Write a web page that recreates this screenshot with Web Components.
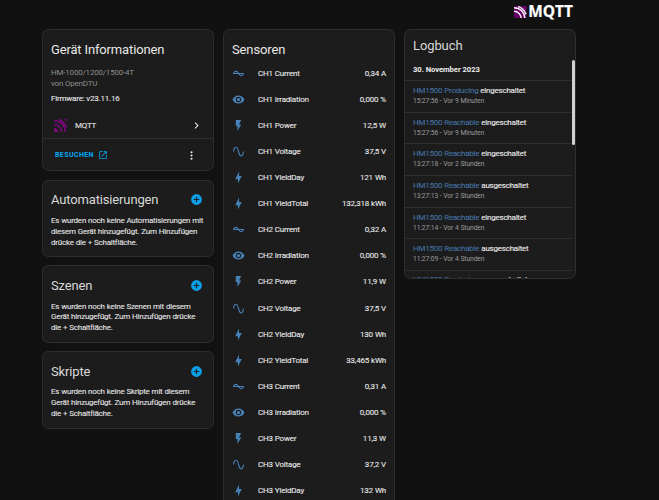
<!DOCTYPE html>
<html lang="de">
<head>
<meta charset="utf-8">
<title>MQTT</title>
<style>
html,body{margin:0;height:100%;background:#111;overflow:hidden}
body{font-family:Roboto,"Noto Sans",sans-serif;color:#e1e1e1}
</style>
</head>
<body>
<device-page></device-page>
<script>
const define = (name, html, setup) => {
  const t = document.createElement('template');
  t.innerHTML = html;
  customElements.define(name, class extends HTMLElement {
    constructor() { super(); this.attachShadow({mode: 'open'}).append(t.content.cloneNode(true)); }
    connectedCallback() { if (setup) setup(this, this.shadowRoot); }
  });
};

const icons = {
  current: 'M12.43 11C12.28 10.84 10 7 7 7S2.32 10.18 2 11V13H11.57C11.72 13.16 14 17 17 17S21.68 13.82 22 13V11H12.43M7 9C8.17 9 9.18 9.85 10 11H4.31C4.78 10.17 5.54 9 7 9M17 15C15.83 15 14.82 14.15 14 13H19.69C19.22 13.83 18.46 15 17 15Z',
  eye: 'M12 9A3 3 0 0 0 9 12A3 3 0 0 0 12 15A3 3 0 0 0 15 12A3 3 0 0 0 12 9M12 17A5 5 0 0 1 7 12A5 5 0 0 1 12 7A5 5 0 0 1 17 12A5 5 0 0 1 12 17M12 4.5C7 4.5 2.73 7.61 1 12C2.73 16.39 7 19.5 12 19.5C17 19.5 21.27 16.39 23 12C21.27 7.61 17 4.5 12 4.5Z',
  flash: 'M7 2V13H10V22L17 10H13L17 2H7Z',
  sine: 'M16.5 21C13.5 21 12.31 16.76 11.05 12.28C10.14 9.04 9 5 7.5 5C4.11 5 4 11.93 4 12H2C2 11.63 2.06 3 7.5 3C10.5 3 11.71 7.25 12.97 11.74C13.83 14.8 15 19 16.5 19C19.94 19 20.03 12.07 20.03 12H22.03C22.03 12.37 21.97 21 16.5 21Z',
  bolt: 'M11 15H6L13 1V9H18L11 23V15Z',
  plus: 'M17 13H13V17H11V13H7V11H11V7H13V11H17M12 2A10 10 0 0 0 2 12A10 10 0 0 0 12 22A10 10 0 0 0 22 12A10 10 0 0 0 12 2Z',
  open: 'M14 3V5H17.59L7.76 14.83L9.17 16.24L19 6.41V10H21V3M19 19H5V5H12V3H5C3.89 3 3 3.9 3 5V19A2 2 0 0 0 5 21H19A2 2 0 0 0 21 19V12H19V19Z',
  chevron: 'M8.59 16.58L13.17 12L8.59 7.41L10 6L16 12L10 18L8.59 16.58Z',
  dots: 'M12 16A2 2 0 1 1 12 20A2 2 0 0 1 12 16M12 10A2 2 0 1 1 12 14A2 2 0 0 1 12 10M12 4A2 2 0 1 1 12 8A2 2 0 0 1 12 4Z'
};
define('mdi-icon', `<style>:host{display:block;width:13px;height:13px;flex:none}svg{display:block;width:100%;height:100%;fill:currentColor}</style><svg viewBox="0 0 24 24"><path/></svg>`,
  (el, r) => r.querySelector('path').setAttribute('d', icons[el.getAttribute('name')]));

define('mqtt-mark', `<style>
:host{display:block;width:13px;height:13px;flex:none;--tile:none;--wave:#7a087a}
svg{display:block;width:100%;height:100%}</style>
<svg viewBox="0 0 24 24"><rect width="24" height="24" rx="1" fill="var(--tile)"/>
<g fill="none" stroke="var(--wave)" stroke-width="2.9"><path d="M0 10.2A13.8 13.8 0 0 1 13.8 24"/><path d="M0 3.2A20.8 20.8 0 0 1 20.8 24" /><path d="M8 .8A27 27 0 0 1 23.2 16"/></g>
<path d="M0 16.5A7.5 7.5 0 0 1 7.5 24H0Z M19 0H24V5Z" fill="var(--dot,#7a087a)"/></svg>`);

define('page-logo', `<style>
:host{display:flex;align-items:center;justify-content:flex-end;gap:1.5px;height:14px}
mqtt-mark{width:12.5px;height:12.5px;--tile:#660066;--wave:#f4eef4;--dot:#660066}
span{font:700 15.4px/16px "Open Sans",sans-serif;color:#fff;letter-spacing:.05px;-webkit-text-stroke:.2px #fff}
</style><mqtt-mark></mqtt-mark><span>MQTT</span>`);

define('ha-card', `<style>
:host{display:block;box-sizing:border-box;background:#1c1c1c;border:1px solid #2e2e2e;border-radius:6.5px;overflow:hidden}
</style><slot></slot>`);

define('info-card', `<style>
:host{display:block}
ha-card{height:142.3px}
h1{font-size:13px;letter-spacing:-.15px;font-weight:400;line-height:16px;margin:12px 8px 0;color:#e8e8e8}
p{font-size:8px;letter-spacing:-.2px;line-height:11px;margin:8.5px 8px 0;color:#8d8d8d}
.fw{margin-top:4.3px;color:#e8e8e8;-webkit-text-stroke:.1px}
.row{display:flex;align-items:center;height:26px;padding:0 10px 0 11px;margin-top:8.7px;font-size:8px;letter-spacing:-.2px;-webkit-text-stroke:.1px}
.row span{flex:1;margin-left:8px}
.foot{display:flex;align-items:center;border-top:1px solid #303030;height:33px;padding:0 15px 0 12px;color:#03a9f4;box-sizing:border-box}
.foot span{font-size:7px;font-weight:700;letter-spacing:.4px;margin-right:4px}
.foot mdi-icon{width:10px;height:10px}
.foot .m{margin-left:auto;color:#e8e8e8;width:13px;height:13px}
</style>
<ha-card><h1>Gerät Informationen</h1><p>HM-1000/1200/1500-4T<br>von OpenDTU</p><p class="fw">Firmware: v23.11.16</p>
<div class="row"><mqtt-mark></mqtt-mark><span>MQTT</span><mdi-icon name="chevron"></mdi-icon></div>
<div class="foot"><span>BESUCHEN</span><mdi-icon name="open"></mdi-icon><mdi-icon class="m" name="dots"></mdi-icon></div></ha-card>`);

define('empty-card', `<style>
:host{display:block}
ha-card{height:77.5px;padding:0 8px}
header{display:flex;align-items:center;justify-content:space-between;height:16px;margin-top:11.3px;padding-right:2.5px;font-size:13px;letter-spacing:-.15px;color:#d8d8d8}
mdi-icon{color:#0a9fe8}
p{margin:7.9px 0 0;font-size:8px;letter-spacing:-.23px;word-spacing:.25px;line-height:10.9px;white-space:nowrap;color:#e1e1e1;-webkit-text-stroke:.1px}
</style><ha-card><header><slot name="title"></slot><mdi-icon name="plus"></mdi-icon></header><p><slot></slot></p></ha-card>`);

define('sensor-row', `<style>
:host{display:flex;align-items:center;height:26.1px;padding:0 8px;font-size:8px;letter-spacing:-.2px;word-spacing:.2px;line-height:11px;color:#e8e8e8;-webkit-text-stroke:.1px}
.v{margin-left:auto}
</style><slot name="icon"></slot><slot></slot><span class="v"><slot name="value"></slot></span>`);

define('sensor-card', `<style>
:host{display:block}
ha-card{height:500px}
h1{font-size:13px;letter-spacing:-.13px;font-weight:400;line-height:16px;margin:12px 8px 2.2px;color:#e8e8e8}
mdi-icon{color:#4682b8;margin-right:13px}
</style><ha-card><h1>Sensoren</h1><div></div></ha-card>`, (el, r) => {
  const kinds = [['Current','current'],['Irradiation','eye'],['Power','flash'],['Voltage','sine'],['YieldDay','bolt'],['YieldTotal','bolt']];
  const values = ['0,34 A','0,000 %','12,5 W','37,5 V','121 Wh','132,318 kWh','0,32 A','0,000 %','11,9 W','37,5 V','130 Wh','33,465 kWh','0,31 A','0,000 %','11,3 W','37,2 V','132 Wh'];
  r.querySelector('div').innerHTML = values.map((v, i) => {
    const [label, icon] = kinds[i % 6];
    return `<sensor-row><mdi-icon slot="icon" name="${icon}"></mdi-icon>CH${Math.floor(i / 6) + 1} ${label}<span slot="value">${v}</span></sensor-row>`;
  }).join('');
});

define('log-entry', `<style>
:host{display:block;box-sizing:border-box;height:31.7px;border-top:1px solid #303030;padding:4px 8px 0;font-size:8px;letter-spacing:-.23px;word-spacing:.2px;line-height:11px;color:#e8e8e8;white-space:nowrap;-webkit-text-stroke:.12px}
:host(:last-child){padding-top:3.2px}
b{font-weight:400;color:#416f9f}
small{display:block;font-size:6.8px;letter-spacing:-.14px;line-height:11.6px;color:#9b9b9b;-webkit-text-stroke:0}
</style><b><slot name="entity"></slot></b> <slot></slot><small><slot name="time"></slot></small>`);

define('log-card', `<style>
:host{display:block}
ha-card{height:249.5px}
h1{font-size:13px;letter-spacing:-.1px;font-weight:400;line-height:16px;margin:7.5px 8px 6.5px;color:#d8d8d8}
.body{display:flex;align-items:flex-start;height:218.5px;overflow:hidden}
.list{flex:1}
.date{font-size:7.6px;letter-spacing:-.03px;font-weight:700;height:20px;line-height:20px;padding-left:8px;color:#eee}
.bar{width:3px;height:85px;border-radius:1.5px;background:#d0d0d0}
</style><ha-card><h1>Logbuch</h1><div class="body"><div class="list"><div class="date">30. November 2023</div><section></section></div><div class="bar"></div></div></ha-card>`, (el, r) => {
  const rows = [['Producing','ein','15:27:56 - Vor 9 Minuten'],['Reachable','ein','15:27:56 - Vor 9 Minuten'],['Reachable','ein','13:27:18 - Vor 2 Stunden'],['Reachable','aus','13:27:13 - Vor 2 Stunden'],['Reachable','ein','11:27:14 - Vor 4 Stunden'],['Reachable','aus','11:27:09 - Vor 4 Stunden'],['Producing','aus','']];
  r.querySelector('section').innerHTML = rows.map(([n, s, t]) => `<log-entry><span slot="entity">HM1500 ${n}</span>${s}geschaltet<span slot="time">${t}</span></log-entry>`).join('');
});

define('device-page', `<style>
:host{display:block;box-sizing:border-box;width:659px;height:500px;overflow:hidden;padding:5px 83px 0 42px}
page-logo{margin:0 3px 10px 0}
main{display:grid;grid-template-columns:172px 172px 172px;gap:9px;align-items:start}
.left{display:grid;gap:8.3px}
</style>
<page-logo></page-logo>
<main><div class="left"><info-card></info-card>
<empty-card><span slot="title">Automatisierungen</span>Es wurden noch keine Automatisierungen mit<br>diesem Gerät hinzugefügt. Zum Hinzufügen<br>drücke die + Schaltfläche.</empty-card>
<empty-card><span slot="title">Szenen</span>Es wurden noch keine Szenen mit diesem<br>Gerät hinzugefügt. Zum Hinzufügen drücke<br>die + Schaltfläche.</empty-card>
<empty-card><span slot="title">Skripte</span>Es wurden noch keine Skripte mit diesem<br>Gerät hinzugefügt. Zum Hinzufügen drücke<br>die + Schaltfläche.</empty-card></div>
<sensor-card></sensor-card><log-card></log-card></main>`);
</script>
</body>
</html>
